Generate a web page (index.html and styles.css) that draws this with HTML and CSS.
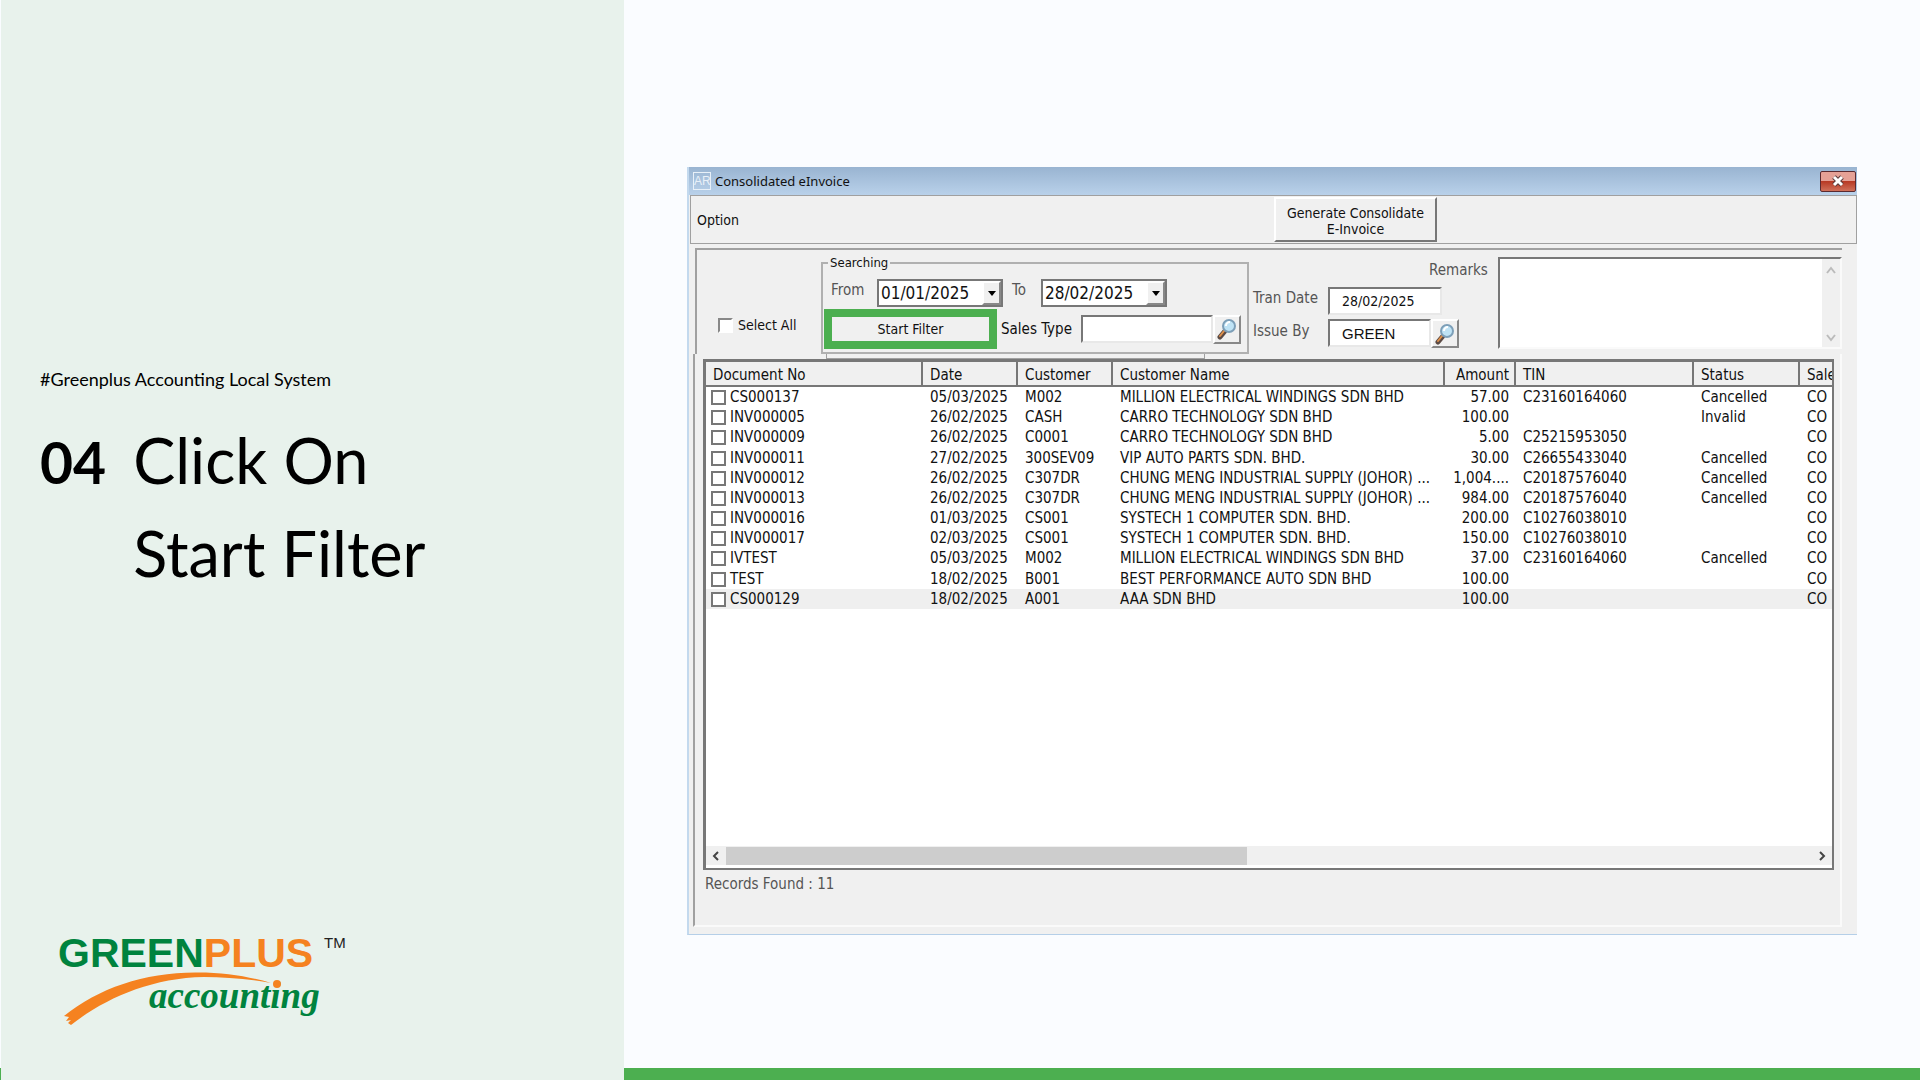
FILE: index.html
```html
<!DOCTYPE html>
<html lang="en">
<head>
    <meta charset="utf-8">
    <meta name="viewport" content="width=device-width, initial-scale=1.0">
    <title>Click On Start Filter</title>
    <link rel="stylesheet" href="styles.css">
</head>
<body>
    <div class="slide">
        <div class="side">
            <p class="tag">#Greenplus Accounting Local System</p>
            <div class="step">
                <span class="step-num">04</span>
                <h1>Click On<br>Start Filter</h1>
            </div>
            <svg class="logo" viewBox="0 0 310 110" role="img" aria-label="Greenplus Accounting">
                <text class="logo-main" x="9" y="38"><tspan fill="#00833e">GREEN</tspan><tspan fill="#f58220">PLUS</tspan></text>
                <text class="logo-tm" x="275" y="19">TM</text>
                <path fill="#f58220" d="M15 87 C50 59 96 43 149 43.500 C177 43.500 202 48 222 54 C200 50 176 48 155 48 C101 49 55 70 22 96 L19 94 L22 91 L17 92 L20 88 Z"/>
                <text class="logo-sub" x="100" y="79">accounting</text>
                <circle cx="228" cy="55" r="4" fill="#f58220"/>
            </svg>
        </div>

        <div class="stage">
            <div class="window">
                <div class="titlebar">
                    <span class="app-icon">AR</span>
                    <span class="title">Consolidated eInvoice</span>
                    <button class="close" aria-label="Close">
                        <svg width="14" height="12" viewBox="0 0 14 12"><path d="M3 2 L11 10 M11 2 L3 10" stroke="#5a3a3a" stroke-width="5"/><path d="M3 2 L11 10 M11 2 L3 10" stroke="#fff" stroke-width="3"/></svg>
                    </button>
                </div>

                <div class="menubar">
                    <span class="option">Option</span>
                    <button class="generate">Generate Consolidate<br>E-Invoice</button>
                </div>

                <div class="filters">
                    <div class="select-all">
                        <input type="checkbox" id="all">
                        <label for="all">Select All</label>
                    </div>
                    <fieldset class="searching">
                        <legend>Searching</legend>
                        <div class="line dates">
                            <label class="soft" for="from">From</label>
                            <div class="combo">
                                <input type="text" id="from" value="01/01/2025">
                                <button aria-label="Open from date"><i class="down"></i></button>
                            </div>
                            <label class="soft" for="to">To</label>
                            <div class="combo">
                                <input type="text" id="to" value="28/02/2025">
                                <button aria-label="Open to date"><i class="down"></i></button>
                            </div>
                        </div>
                        <div class="line">
                            <button class="start">Start Filter</button>
                            <label for="sales">Sales Type</label>
                            <input class="field sales" type="text" id="sales">
                            <button class="find" aria-label="Find sales type">
                                <svg width="20" height="22" viewBox="0 0 20 22"><path d="M3 19 L8 13" stroke="#5b4a44" stroke-width="5" stroke-linecap="round"/><path d="M3 18 L7 13" stroke="#e0914a" stroke-width="2" stroke-linecap="round"/><circle cx="12" cy="8" r="6" fill="#bfe3f5" stroke="#7d9fb8" stroke-width="2"/><path d="M9 8 A4 4 0 0 1 13 4" fill="none" stroke="#fff" stroke-width="2"/></svg>
                            </button>
                        </div>
                    </fieldset>
                    <div class="tran">
                        <label class="soft" for="tran">Tran Date</label>
                        <input class="field tran-date" type="text" id="tran" value="28/02/2025">
                        <label class="soft" for="issue">Issue By</label>
                        <div class="issue">
                            <input class="field arial" type="text" id="issue" value="GREEN">
                            <button class="find" aria-label="Find issuer">
                                <svg width="20" height="22" viewBox="0 0 20 22"><path d="M3 19 L8 13" stroke="#5b4a44" stroke-width="5" stroke-linecap="round"/><path d="M3 18 L7 13" stroke="#e0914a" stroke-width="2" stroke-linecap="round"/><circle cx="12" cy="8" r="6" fill="#bfe3f5" stroke="#7d9fb8" stroke-width="2"/><path d="M9 8 A4 4 0 0 1 13 4" fill="none" stroke="#fff" stroke-width="2"/></svg>
                            </button>
                        </div>
                    </div>
                    <label class="soft remarks-label" for="remarks">Remarks</label>
                    <div class="remarks">
                        <textarea id="remarks"></textarea>
                        <div class="vscroll">
                            <svg width="10" height="8" viewBox="0 0 10 8"><path d="M1 7 L5 2 L9 7" /></svg>
                            <svg width="10" height="8" viewBox="0 0 10 8"><path d="M1 1 L5 6 L9 1" /></svg>
                        </div>
                    </div>
                </div>

                <div class="records">
                    <div class="tab-edge"></div>
                    <div class="list">
                        <table>
                            <colgroup>
                                <col class="c-doc"><col class="c-short"><col class="c-short"><col class="c-name"><col class="c-amount"><col class="c-tin"><col class="c-status"><col>
                            </colgroup>
                            <thead>
                                <tr><th>Document No</th><th>Date</th><th>Customer</th><th>Customer Name</th><th class="num">Amount</th><th>TIN</th><th>Status</th><th>Sales</th></tr>
                            </thead>
                            <tbody>
                                <tr><td><label><input type="checkbox">CS000137</label></td><td>05/03/2025</td><td>M002</td><td>MILLION ELECTRICAL WINDINGS SDN BHD</td><td class="num">57.00</td><td>C23160164060</td><td>Cancelled</td><td>CO</td></tr>
                                <tr><td><label><input type="checkbox">INV000005</label></td><td>26/02/2025</td><td>CASH</td><td>CARRO TECHNOLOGY SDN BHD</td><td class="num">100.00</td><td></td><td>Invalid</td><td>CO</td></tr>
                                <tr><td><label><input type="checkbox">INV000009</label></td><td>26/02/2025</td><td>C0001</td><td>CARRO TECHNOLOGY SDN BHD</td><td class="num">5.00</td><td>C25215953050</td><td></td><td>CO</td></tr>
                                <tr><td><label><input type="checkbox">INV000011</label></td><td>27/02/2025</td><td>300SEV09</td><td>VIP AUTO PARTS SDN. BHD.</td><td class="num">30.00</td><td>C26655433040</td><td>Cancelled</td><td>CO</td></tr>
                                <tr><td><label><input type="checkbox">INV000012</label></td><td>26/02/2025</td><td>C307DR</td><td>CHUNG MENG INDUSTRIAL SUPPLY (JOHOR) ...</td><td class="num">1,004....</td><td>C20187576040</td><td>Cancelled</td><td>CO</td></tr>
                                <tr><td><label><input type="checkbox">INV000013</label></td><td>26/02/2025</td><td>C307DR</td><td>CHUNG MENG INDUSTRIAL SUPPLY (JOHOR) ...</td><td class="num">984.00</td><td>C20187576040</td><td>Cancelled</td><td>CO</td></tr>
                                <tr><td><label><input type="checkbox">INV000016</label></td><td>01/03/2025</td><td>CS001</td><td>SYSTECH 1 COMPUTER SDN. BHD.</td><td class="num">200.00</td><td>C10276038010</td><td></td><td>CO</td></tr>
                                <tr><td><label><input type="checkbox">INV000017</label></td><td>02/03/2025</td><td>CS001</td><td>SYSTECH 1 COMPUTER SDN. BHD.</td><td class="num">150.00</td><td>C10276038010</td><td></td><td>CO</td></tr>
                                <tr><td><label><input type="checkbox">IVTEST</label></td><td>05/03/2025</td><td>M002</td><td>MILLION ELECTRICAL WINDINGS SDN BHD</td><td class="num">37.00</td><td>C23160164060</td><td>Cancelled</td><td>CO</td></tr>
                                <tr><td><label><input type="checkbox">TEST</label></td><td>18/02/2025</td><td>B001</td><td>BEST PERFORMANCE AUTO SDN BHD</td><td class="num">100.00</td><td></td><td></td><td>CO</td></tr>
                                <tr class="current"><td><label><input type="checkbox">CS000129</label></td><td>18/02/2025</td><td>A001</td><td>AAA SDN BHD</td><td class="num">100.00</td><td></td><td></td><td>CO</td></tr>
                            </tbody>
                        </table>
                        <div class="hscroll">
                            <svg width="8" height="10" viewBox="0 0 8 10"><path d="M6 1 L2 5 L6 9" /></svg>
                            <div class="track"><div class="thumb"></div></div>
                            <svg width="8" height="10" viewBox="0 0 8 10"><path d="M2 1 L6 5 L2 9" /></svg>
                        </div>
                    </div>
                    <p class="found soft">Records Found : 11</p>
                </div>
            </div>
        </div>
    </div>
</body>
</html>
```
FILE: styles.css
```css
*{
    box-sizing: border-box;
}
body{
    margin: 0;
    background: #4caf50;
    font-family: "DejaVu Sans Condensed", "Noto Sans", sans-serif;
    font-size: 15px;
    line-height: 20px;
    color: #111;
}
button, input, textarea{
    font: inherit;
    color: inherit;
    margin: 0;
    padding: 0;
    border-radius: 0;
}
p, h1{
    margin: 0;
}
.slide{
    display: flex;
    min-height: 100vh;
    padding-left: 1px;
    background: linear-gradient(#fafcff, #fafcff) 0 0 / 100% calc(100% - 12px) no-repeat;
}

/* left panel */
.side{
    width: 623px;
    flex: none;
    display: flex;
    flex-direction: column;
    padding: 367px 39px 41px;
    background: #e8f2ec;
    font-family: Lato, sans-serif;
    color: #000;
}
.tag{
    font-size: 18px;
    line-height: 24px;
}
.step{
    display: flex;
    align-items: baseline;
    gap: 27px;
    margin-top: 22px;
}
.step-num{
    font-size: 57px;
    font-weight: bold;
}
.step h1{
    font-size: 63px;
    line-height: 93px;
    font-weight: normal;
}
.logo{
    width: 310px;
    height: 110px;
    margin-top: auto;
    margin-left: 9px;
}
.logo-main{
    font: bold 41px "Liberation Sans", sans-serif;
}
.logo-tm{
    font: 15px "Liberation Sans", sans-serif;
    fill: #222;
}
.logo-sub{
    font: italic bold 37px "Liberation Serif", serif;
    fill: #00833e;
}

/* window */
.stage{
    flex: 1;
    display: flex;
    min-width: 0;
    padding: 167px 63px 145px;
}
.window{
    flex: 1;
    min-width: 0;
    display: flex;
    flex-direction: column;
    background: #f0f0f0;
    border-left: 2px solid #c3d9ee;
    border-bottom: 1px solid #b5cfe8;
}
.titlebar{
    display: flex;
    align-items: center;
    height: 28px;
    padding: 0 1px 0 4px;
    background: linear-gradient(#99b4d1, #b9d1ea);
}
.app-icon{
    width: 18px;
    height: 18px;
    border: 1px solid #e8f0f8;
    color: #e8f0f8;
    font: 12px/16px "Liberation Sans", sans-serif;
    text-align: center;
}
.title{
    flex: 1;
    margin-left: 4px;
    font-family: "Noto Sans", sans-serif;
    font-size: 13px;
}
.close{
    display: flex;
    align-items: center;
    justify-content: center;
    width: 36px;
    height: 21px;
    border: 1px solid #5a2a30;
    border-radius: 2px;
    background: linear-gradient(#e5a196 0 45%, #b83a25 50%, #d0705a);
}
.menubar{
    display: flex;
    align-items: center;
    height: 49px;
    margin-left: 1px;
    padding-left: 6px;
    border: 1px solid #a0a0a0;
    font-size: 14px;
}
.option{
    width: 577px;
}
.generate{
    width: 163px;
    height: 45px;
    padding-top: 2px;
    line-height: 16px;
    background: #f0f0f0;
    border: 2px solid;
    border-color: #fff #777 #777 #fff;
}
.filters{
    display: flex;
    height: 106px;
    margin: 4px 15px 0 6px;
    border-top: 2px solid #a0a0a0;
    border-left: 2px solid #a0a0a0;
}
.soft{
    color: #555;
}
input[type="checkbox"]{
    appearance: none;
    width: 15px;
    height: 15px;
    flex: none;
    background: #fff;
    border: 2px solid #777;
}
.select-all{
    display: flex;
    align-items: center;
    align-self: flex-start;
    width: 124px;
    padding-left: 21px;
    margin-top: 65px;
    gap: 5px;
    font-size: 14px;
}
.select-all input{
    border-color: #888 #fff #fff #888;
}
.searching{
    width: 428px;
    min-width: 0;
    height: 101px;
    flex: none;
    margin: 3px 0 0;
    padding: 0 2px 0 1px;
    border: 2px solid #b0b0b0;
}
legend{
    font-size: 13px;
    margin-left: 4px;
    padding: 0 2px;
}
.line{
    display: flex;
    align-items: center;
    gap: 4px;
}
.dates{
    padding-left: 7px;
    margin: 6px 0 2px;
    height: 28px;
    gap: 9px;
}
.dates .soft{
    min-width: 20px;
    padding-bottom: 6px;
}
.dates .soft:first-child{
    width: 37px;
}
.combo{
    display: flex;
    width: 126px;
    height: 28px;
    background: #fff;
    border: 2px solid #777;
}
.combo input{
    flex: 1;
    min-width: 0;
    padding-left: 2px;
    border: 0;
    font-size: 17px;
}
.combo button, .find{
    display: flex;
    align-items: center;
    justify-content: center;
    background: #f0f0f0;
    border: 2px solid;
    border-color: #fff #888 #888 #fff;
}
.combo button{
    width: 19px;
}
.down{
    border: 4px solid transparent;
    border-top: 5px solid #000;
    border-bottom: 0;
}
.start{
    width: 173px;
    height: 40px;
    border: 8px solid #4caf50;
    background: #f0f0f0;
    font-size: 14px;
}
.line label{
    white-space: nowrap;
}
.field{
    min-width: 0;
    height: 28px;
    background: #fff;
    border: 2px solid;
    border-color: #777 #e8e8e8 #e8e8e8 #777;
}
.sales{
    flex: 1;
    margin-left: 5px;
}
.find{
    width: 28px;
    height: 29px;
    flex: none;
}
.line .find{
    margin-left: -4px;
    margin-right: 4px;
}
.tran{
    display: grid;
    grid-template-columns: 75px auto;
    align-items: center;
    align-content: start;
    row-gap: 4px;
    margin: 37px 0 0 4px;
}
.tran label{
    padding-bottom: 6px;
}
.tran .field{
    padding-left: 12px;
}
.tran-date{
    width: 114px;
    font-size: 14px;
}
.issue{
    display: flex;
    width: 131px;
}
.issue .field{
    flex: 1;
}
.arial{
    font-family: "Liberation Sans", sans-serif;
}
.remarks-label{
    margin: 10px 10px 0 -30px;
}
.remarks{
    flex: 1;
    display: flex;
    height: 92px;
    margin-top: 7px;
    background: #fff;
    border: 2px solid;
    border-color: #777 #fafafa #fafafa #777;
}
.remarks textarea{
    flex: 1;
    min-width: 0;
    border: 0;
    resize: none;
}
.vscroll{
    display: flex;
    flex-direction: column;
    justify-content: space-between;
    align-items: center;
    width: 18px;
    padding: 7px 0 5px;
    background: #f0f0f0;
}
.vscroll path, .hscroll path{
    fill: none;
    stroke: #bbb;
    stroke-width: 2;
}

/* records */
.records{
    flex: 1;
    display: flex;
    flex-direction: column;
    margin: 0 15px 7px 4px;
    padding: 0 6px 0 8px;
    border: 2px solid #fafafa;
    border-top: 0;
    border-left-color: #a0a0a0;
}
.tab-edge{
    width: 379px;
    height: 5px;
    margin-left: 123px;
    border: 1px solid #a0a0a0;
    border-top: 0;
}
.list{
    flex: 1;
    display: flex;
    flex-direction: column;
    overflow: hidden;
    background: #fff;
    border: 3px solid #777;
    border-right-width: 2px;
    border-bottom-width: 2px;
}
table{
    width: 100%;
    height: 247px;
    table-layout: fixed;
    border-collapse: separate;
    border-spacing: 0;
}
.c-doc{
    width: 217px;
}
.c-short{
    width: 95px;
}
.c-name{
    width: 332px;
}
.c-amount{
    width: 71px;
}
.c-tin{
    width: 178px;
}
.c-status{
    width: 106px;
}
th, td{
    padding: 0 7px;
    text-align: left;
    font-weight: normal;
    line-height: 20px;
    white-space: nowrap;
    overflow: hidden;
}
th{
    height: 25px;
    padding: 2px 5px 0 7px;
    background: #f0f0f0;
    border-right: 2px solid #777;
    border-bottom: 2px solid #777;
}
td{
    padding-top: 1px;
    line-height: 19px;
}
th:last-child{
    border-right: 0;
}
th:last-child, td:last-child{
    padding-right: 0;
}
td:first-child{
    padding-left: 5px;
}
td label{
    display: flex;
    align-items: center;
    gap: 4px;
}
.num{
    text-align: right;
}
.current td{
    background: #efefef;
}
.hscroll{
    display: flex;
    align-items: center;
    justify-content: space-between;
    height: 19px;
    margin-top: auto;
    margin-bottom: 3px;
    padding: 0 6px;
    background: #f0f0f0;
}
.hscroll path{
    stroke: #444;
}
.track{
    flex: 1;
    margin: 0 6px;
}
.thumb{
    width: 48%;
    height: 18px;
    background: #cdcdcd;
}
.found{
    padding: 4px 2px 0;
    height: 55px;
}
```
